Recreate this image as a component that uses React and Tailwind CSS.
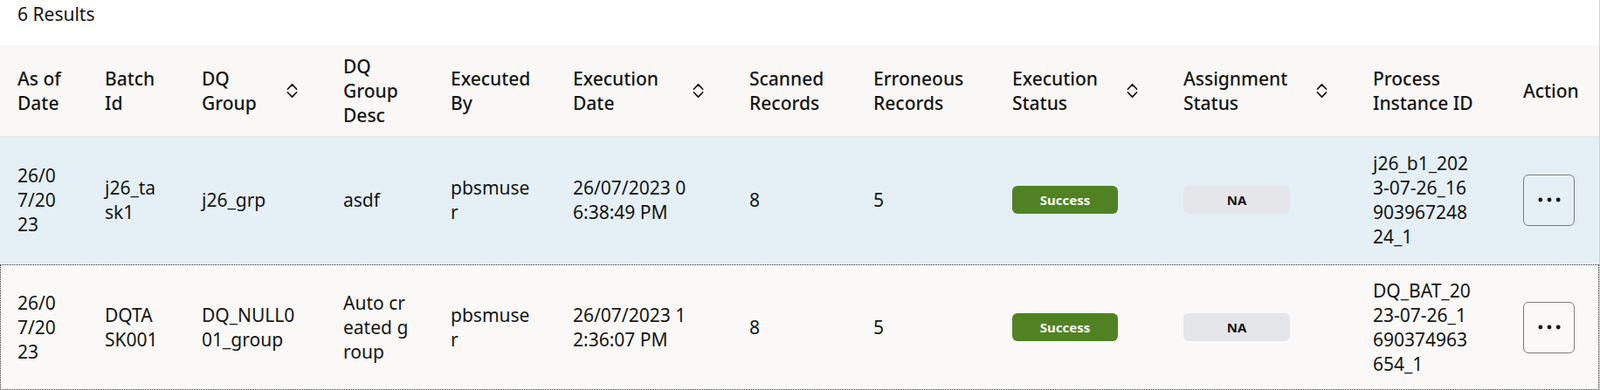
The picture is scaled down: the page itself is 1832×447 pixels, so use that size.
import React from 'react';

const GRID =
  'grid grid-cols-[100px_111px_162px_123px_140px_202px_142px_159px_196px_217px_172px_107px]';

const headers = [
  { lines: ['As of', 'Date'] },
  { lines: ['Batch', 'Id'] },
  { lines: ['DQ', 'Group'], sort: true },
  { lines: ['DQ', 'Group', 'Desc'] },
  { lines: ['Executed', 'By'] },
  { lines: ['Execution', 'Date'], sort: true },
  { lines: ['Scanned', 'Records'] },
  { lines: ['Erroneous', 'Records'] },
  { lines: ['Execution', 'Status'], sort: true },
  { lines: ['Assignment', 'Status'], sort: true },
  { lines: ['Process', 'Instance ID'] },
  { lines: ['Action'] },
];

const rows = [
  {
    asOf: ['26/0', '7/20', '23'],
    batch: ['j26_ta', 'sk1'],
    group: ['j26_grp'],
    desc: ['asdf'],
    by: ['pbsmuse', 'r'],
    date: ['26/07/2023 0', '6:38:49 PM'],
    scanned: '8',
    errors: '5',
    status: 'Success',
    assignment: 'NA',
    instance: ['j26_b1_202', '3-07-26_16', '903967248', '24_1'],
    selected: true,
  },
  {
    asOf: ['26/0', '7/20', '23'],
    batch: ['DQTA', 'SK001'],
    group: ['DQ_NULL0', '01_group'],
    desc: ['Auto cr', 'eated g', 'roup'],
    by: ['pbsmuse', 'r'],
    date: ['26/07/2023 1', '2:36:07 PM'],
    scanned: '8',
    errors: '5',
    status: 'Success',
    assignment: 'NA',
    instance: ['DQ_BAT_20', '23-07-26_1', '690374963', '654_1'],
    focused: true,
  },
];

const SortIcon = () => (
  <svg width="13" height="18" viewBox="0 0 13 18" fill="none" stroke="#161513" strokeWidth="1.8" strokeLinecap="round" strokeLinejoin="round">
    <path d="M1.5 7 L6.5 1.8 L11.5 7" />
    <path d="M1.5 11 L6.5 16.2 L11.5 11" />
  </svg>
);

const Lines = ({ lines }) => (
  <div>
    {lines.map((l, i) => (
      <span key={i} className="block whitespace-nowrap">
        {l}
      </span>
    ))}
  </div>
);

const Cell = ({ children }) => <div className="pl-5 flex items-center">{children}</div>;

export default function App() {
  return (
    <div className="w-[1832px] bg-white border-r border-[#d4d2cf] font-['Noto_Sans',sans-serif] text-[21px] leading-[28px] text-[#161513]">
      <div className="h-[52px] pl-5 pt-[2px]">6 Results</div>

      <div className={`${GRID} bg-[#f9f8f6] border-b border-[#e4e2df] py-[10px] font-medium`}>
        {headers.map((h, i) => (
          <div key={i} className={`pl-5 flex items-center ${h.sort ? 'justify-between pr-8' : ''}`}>
            <Lines lines={h.lines} />
            {h.sort && <SortIcon />}
          </div>
        ))}
      </div>

      {rows.map((r, i) => (
        <div
          key={i}
          className={`${GRID} ${
            r.selected ? 'bg-[#e4f0f6] pt-4 pb-[18px]' : 'bg-[#faf9f8] py-4 outline-1 outline-dotted outline-[#2b2b2b] -outline-offset-1'
          }`}
        >
          <Cell><Lines lines={r.asOf} /></Cell>
          <Cell><Lines lines={r.batch} /></Cell>
          <Cell><Lines lines={r.group} /></Cell>
          <Cell><Lines lines={r.desc} /></Cell>
          <Cell><Lines lines={r.by} /></Cell>
          <Cell><Lines lines={r.date} /></Cell>
          <Cell>{r.scanned}</Cell>
          <Cell>{r.errors}</Cell>
          <Cell>
            <span className="w-[121px] h-[32px] rounded-md bg-[#508223] text-white text-[15px] leading-none font-bold flex items-center justify-center">
              {r.status}
            </span>
          </Cell>
          <Cell>
            <span className="w-[122px] h-[32px] rounded-md bg-[#e4e6ea] text-[15px] leading-none font-bold flex items-center justify-center">
              {r.assignment}
            </span>
          </Cell>
          <Cell><Lines lines={r.instance} /></Cell>
          <Cell>
            <button className="w-[59px] h-[59px] rounded-md border border-[#7d7d7d] flex items-center justify-center">
              <svg width="26" height="6" viewBox="0 0 26 6" fill="#161513">
                <circle cx="2.8" cy="3" r="2.4" />
                <circle cx="13" cy="3" r="2.4" />
                <circle cx="23.2" cy="3" r="2.4" />
              </svg>
            </button>
          </Cell>
        </div>
      ))}
    </div>
  );
}
